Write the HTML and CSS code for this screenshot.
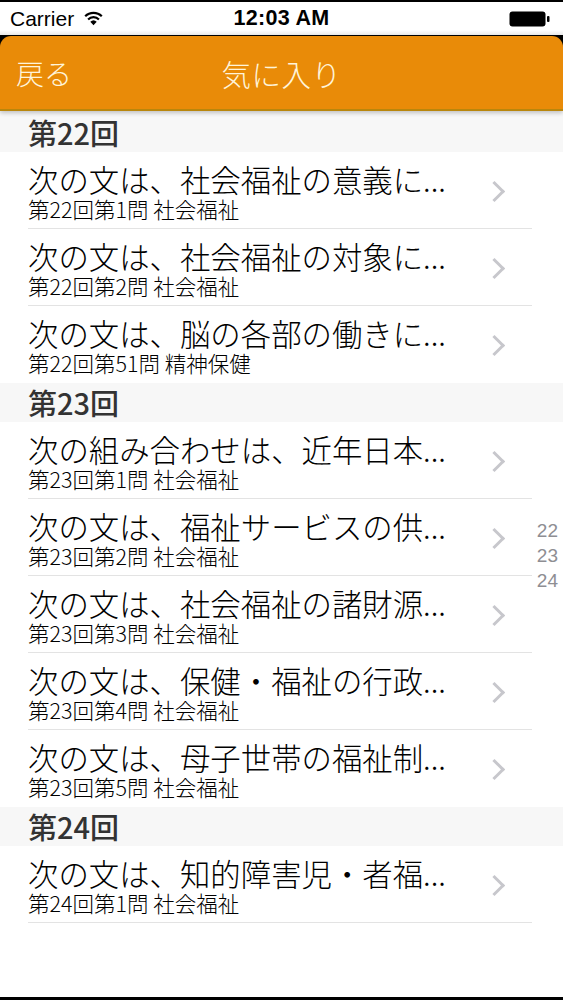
FILE: index.html
```html
<!DOCTYPE html>
<html lang="ja">
<head>
<meta charset="utf-8">
<title>気に入り</title>
<link rel="stylesheet" href="styles.css">
</head>
<body>
<div class="screen">
  <div class="status">
    <div class="status-left">
      <span class="carrier">Carrier</span>
      <svg class="wifi" width="21" height="16" viewBox="0 0 19 14">
        <path d="M9.5 13.5 L6.6 10.4 A4.2 4.2 0 0 1 12.4 10.4 Z" fill="#000"/>
        <path d="M4.6 8.3 A7 7 0 0 1 14.4 8.3" fill="none" stroke="#000" stroke-width="2"/>
        <path d="M2.0 5.5 A10.6 10.6 0 0 1 17.0 5.5" fill="none" stroke="#000" stroke-width="2"/>
      </svg>
    </div>
    <div class="time">12:03 AM</div>
    <div class="status-right">
      <svg class="battery" width="42" height="16" viewBox="0 0 42 16">
        <rect x="0.5" y="0.5" width="36" height="15" rx="3" fill="#000"/>
        <rect x="38" y="5" width="2.5" height="6" rx="1" fill="#000"/>
      </svg>
    </div>
  </div>
  <div class="navbar">
    <span class="back">戻る</span>
    <span class="nav-title">気に入り</span>
    <span class="nav-spacer"></span>
  </div>
  <div class="content">
    <div class="section-header first">第22回</div>
    <div class="row">
      <div class="row-inner">
        <div class="row-text">
          <div class="row-title">次の文は、社会福祉の意義に...</div>
          <div class="row-sub">第22回第1問 社会福祉</div>
        </div>
        <span class="chev"></span>
      </div>
    </div>
    <div class="row">
      <div class="row-inner">
        <div class="row-text">
          <div class="row-title">次の文は、社会福祉の対象に...</div>
          <div class="row-sub">第22回第2問 社会福祉</div>
        </div>
        <span class="chev"></span>
      </div>
    </div>
    <div class="row last">
      <div class="row-inner">
        <div class="row-text">
          <div class="row-title">次の文は、脳の各部の働きに...</div>
          <div class="row-sub">第22回第51問 精神保健</div>
        </div>
        <span class="chev"></span>
      </div>
    </div>

    <div class="section-header">第23回</div>
    <div class="row">
      <div class="row-inner">
        <div class="row-text">
          <div class="row-title">次の組み合わせは、近年日本...</div>
          <div class="row-sub">第23回第1問 社会福祉</div>
        </div>
        <span class="chev"></span>
      </div>
    </div>
    <div class="row">
      <div class="row-inner">
        <div class="row-text">
          <div class="row-title">次の文は、福祉サービスの供...</div>
          <div class="row-sub">第23回第2問 社会福祉</div>
        </div>
        <span class="chev"></span>
      </div>
    </div>
    <div class="row">
      <div class="row-inner">
        <div class="row-text">
          <div class="row-title">次の文は、社会福祉の諸財源...</div>
          <div class="row-sub">第23回第3問 社会福祉</div>
        </div>
        <span class="chev"></span>
      </div>
    </div>
    <div class="row">
      <div class="row-inner">
        <div class="row-text">
          <div class="row-title">次の文は、保健・福祉の行政...</div>
          <div class="row-sub">第23回第4問 社会福祉</div>
        </div>
        <span class="chev"></span>
      </div>
    </div>
    <div class="row last">
      <div class="row-inner">
        <div class="row-text">
          <div class="row-title">次の文は、母子世帯の福祉制...</div>
          <div class="row-sub">第23回第5問 社会福祉</div>
        </div>
        <span class="chev"></span>
      </div>
    </div>

    <div class="section-header">第24回</div>
    <div class="row">
      <div class="row-inner">
        <div class="row-text">
          <div class="row-title">次の文は、知的障害児・者福...</div>
          <div class="row-sub">第24回第1問 社会福祉</div>
        </div>
        <span class="chev"></span>
      </div>
    </div>

    <div class="index">
      <span>22</span>
      <span>23</span>
      <span>24</span>
    </div>
  </div>
</div>
</body>
</html>
```

FILE: styles.css
```css
html, body {
  margin: 0;
  padding: 0;
  background: #000;
}

.screen {
  width: 563px;
  height: 1000px;
  display: flex;
  flex-direction: column;
  background: #000;
  padding-top: 2px;
  padding-bottom: 3px;
  box-sizing: border-box;
  overflow: hidden;
}

.status {
  height: 33px;
  background: linear-gradient(#fff 85%, #e9e9e9);
  display: flex;
  align-items: center;
  justify-content: space-between;
  padding: 0 10px 0 10px;
  font-family: "Liberation Sans", Arial, sans-serif;
  font-size: 21px;
  color: #000;
  position: relative;
  flex-shrink: 0;
}

.status-left {
  display: flex;
  align-items: center;
  gap: 9px;
  width: 150px;
}

.wifi {
  margin-top: -2px;
}

.time {
  font-weight: 700;
  font-size: 21.5px;
  letter-spacing: 0.3px;
}

.status-right {
  width: 150px;
  display: flex;
  justify-content: flex-end;
}

.battery {
  margin-right: 2px;
}

.navbar {
  height: 73px;
  margin-top: 1px;
  background: #e98b08;
  border-radius: 11px 11px 0 0;
  border-bottom: 2px solid #b9860c;
  box-shadow: 0 2px 4px rgba(0, 0, 0, 0.22);
  display: flex;
  align-items: center;
  justify-content: space-between;
  padding: 0 16px;
  font-family: "Noto Sans CJK JP", "Noto Sans", sans-serif;
  color: #fff4da;
  position: relative;
  z-index: 2;
  flex-shrink: 0;
}

.back {
  font-size: 28px;
  font-weight: 300;
  width: 80px;
  padding-top: 1px;
}

.nav-title {
  font-size: 29.5px;
  font-weight: 300;
  letter-spacing: 0.5px;
  padding-top: 1px;
}

.nav-spacer {
  width: 80px;
}

.content {
  flex: 1;
  background: #fff;
  position: relative;
  font-family: "Noto Sans CJK JP", "Noto Sans", sans-serif;
}

.section-header {
  height: 39px;
  background: #f7f7f7;
  padding-left: 28px;
  font-size: 29px;
  font-weight: 500;
  line-height: 39px;
  color: #333;
}

.section-header.first {
  padding-top: 2px;
}

.row {
  height: 77px;
  padding-left: 28px;
  padding-right: 31px;
}

.row-inner {
  height: 77px;
  box-sizing: border-box;
  border-bottom: 1px solid #e3e3e3;
  display: flex;
  align-items: center;
  justify-content: space-between;
}

.row.last .row-inner {
  border-bottom: none;
}

.row-text {
  display: flex;
  flex-direction: column;
  padding-top: 3px;
}

.row-title {
  font-size: 30.4px;
  font-weight: 300;
  line-height: 32px;
  color: #000;
  white-space: nowrap;
}

.row-sub {
  font-size: 21.5px;
  font-weight: 300;
  line-height: 24px;
  margin-top: 2px;
  color: #000;
  white-space: nowrap;
}

.chev {
  width: 12px;
  height: 12px;
  border-top: 3px solid #c7c7cc;
  border-right: 3px solid #c7c7cc;
  transform: rotate(45deg);
  margin-right: 30px;
  margin-top: 2px;
}

.index {
  position: absolute;
  right: 5px;
  top: 407px;
  display: flex;
  flex-direction: column;
  font-family: "Liberation Sans", Arial, sans-serif;
  font-size: 19px;
  line-height: 25px;
  color: #8e8e93;
}
```
